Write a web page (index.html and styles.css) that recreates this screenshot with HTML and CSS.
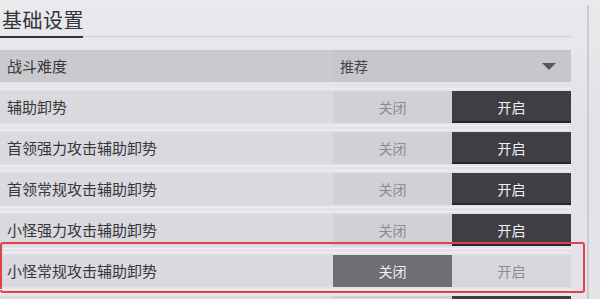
FILE: index.html
```html
<!DOCTYPE html>
<html lang="zh-CN">
<head>
<meta charset="utf-8">
<link rel="stylesheet" href="styles.css">
</head>
<body>
<div class="page">
  <div class="panel">
    <div class="header">
      <div class="title">基础设置</div>
      <div class="rule"><span class="rule-dark"></span></div>
    </div>
    <div class="rows">
      <div class="row row-select">
        <div class="label">战斗难度</div>
        <div class="select">
          <span>推荐</span>
          <span class="arrow"></span>
        </div>
      </div>
      <div class="row">
        <div class="label">辅助卸势</div>
        <div class="toggle"><div class="btn off">关闭</div><div class="btn on">开启</div></div>
      </div>
      <div class="row">
        <div class="label">首领强力攻击辅助卸势</div>
        <div class="toggle"><div class="btn off">关闭</div><div class="btn on">开启</div></div>
      </div>
      <div class="row">
        <div class="label">首领常规攻击辅助卸势</div>
        <div class="toggle"><div class="btn off">关闭</div><div class="btn on">开启</div></div>
      </div>
      <div class="row">
        <div class="label">小怪强力攻击辅助卸势</div>
        <div class="toggle"><div class="btn off">关闭</div><div class="btn on">开启</div></div>
      </div>
      <div class="row highlighted">
        <div class="label">小怪常规攻击辅助卸势</div>
        <div class="toggle"><div class="btn off selected">关闭</div><div class="btn on unselected">开启</div></div>
        <div class="redbox"></div>
      </div>
      <div class="row">
        <div class="label"></div>
        <div class="toggle"><div class="btn off"></div><div class="btn on"></div></div>
      </div>
    </div>
  </div>
  <div class="scrollbar"></div>
</div>
</body>
</html>
```

FILE: styles.css
```css
* { box-sizing: border-box; }
html, body {
  margin: 0;
  padding: 0;
  width: 600px;
  height: 299px;
  overflow: hidden;
}
body {
  background: linear-gradient(180deg, #e9e9ee 0%, #e2e2e8 40%, #e3e3e9 100%);
  font-family: "Noto Sans CJK SC", "Noto Sans", sans-serif;
  color: #3a3a3c;
}
.page {
  display: flex;
  height: 299px;
}
.panel {
  width: 571px;
  flex: none;
}
.scrollbar {
  margin-left: 16px;
  margin-top: 5px;
  width: 2px;
  height: 294px;
  background: #cbcbd0;
}
.header {
  padding-top: 6px;
}
.title {
  font-size: 20px;
  line-height: 28px;
  padding-left: 2px;
  color: #333335;
  letter-spacing: 0.5px;
}
.rule {
  margin-top: 2px;
  height: 2px;
  background: linear-gradient(180deg, #c9c9ce 0 1px, transparent 1px);
  display: flex;
  align-items: flex-start;
}
.rule-dark {
  width: 83px;
  height: 2px;
  background: #343436;
}
.rows {
  margin-top: 12px;
}
.row {
  display: flex;
  height: 32px;
  margin-bottom: 9px;
  position: relative;
  background: #d9d9de;
}
.row::before, .row::after {
  content: "";
  position: absolute;
  left: 0;
  right: 0;
  height: 1px;
  background: #f0f0f4;
}
.row::before { top: -3px; }
.row::after { bottom: -3px; }
.row-select {
  background: #c9c9ce;
}
.row-select::before, .row-select::after { display: none; }
.label {
  width: 333px;
  flex: none;
  font-size: 15px;
  line-height: 32px;
  padding-left: 7px;
  color: #38383a;
}
.select {
  flex: 1;
  display: flex;
  align-items: center;
  justify-content: space-between;
  padding: 0 15px 0 7px;
  background: #c6c6cb;
  font-size: 14px;
  color: #444446;
}
.arrow {
  width: 0;
  height: 0;
  border-left: 7px solid transparent;
  border-right: 7px solid transparent;
  border-top: 7px solid #58585c;
}
.toggle {
  flex: 1;
  display: flex;
}
.btn {
  flex: 1;
  display: flex;
  align-items: center;
  justify-content: center;
  font-size: 14px;
}
.off {
  background: #d1d1d5;
  color: #8c8c90;
}
.on {
  background: #3f3f43;
  color: #f2f2f2;
  box-shadow: inset 0 -2px 0 #262628;
}
.off.selected {
  background: #6f6f73;
  color: #f0f0f0;
}
.on.unselected {
  background: #d7d7db;
  color: #8c8c90;
  box-shadow: none;
}
.redbox {
  position: absolute;
  top: -13px;
  left: 0;
  width: 585px;
  height: 51px;
  border: 2px solid #dc4449;
  border-radius: 3px;
  pointer-events: none;
}
```
